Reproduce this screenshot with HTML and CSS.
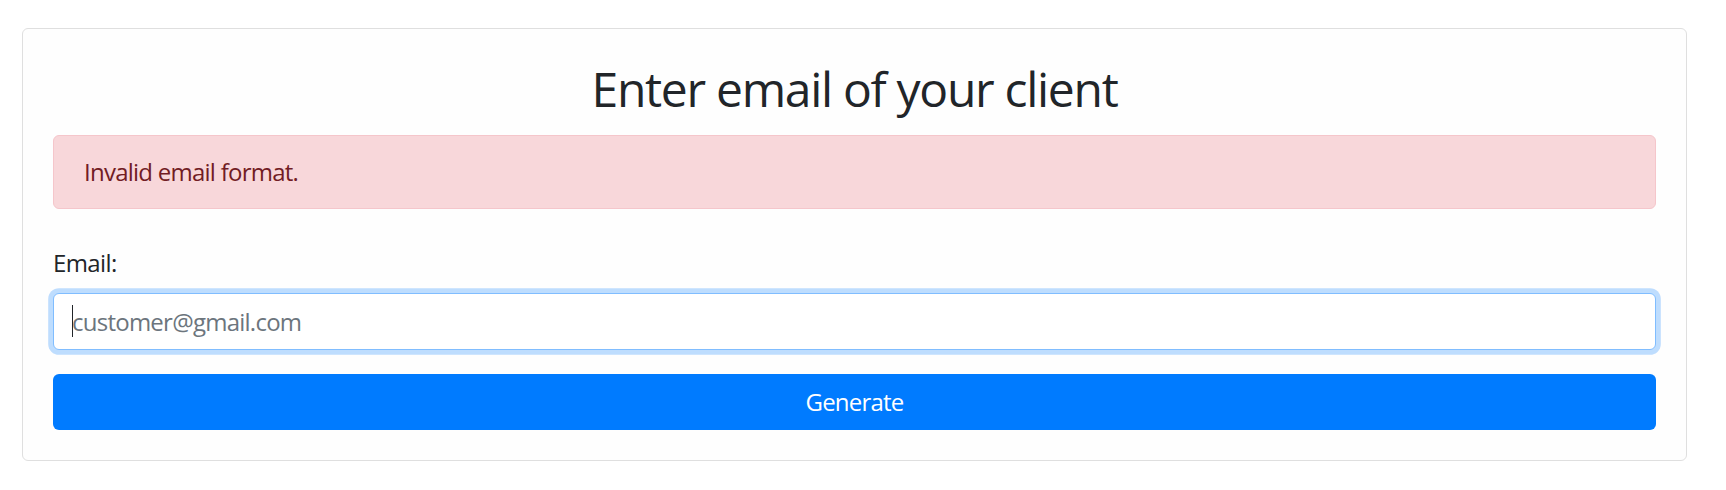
FILE: index.html
```html
<!DOCTYPE html>
<html lang="en">
<head>
<meta charset="utf-8">
<title>Enter email of your client</title>
<link rel="stylesheet" href="styles.css">
</head>
<body>
<main class="page">
  <section class="card">
    <h2 class="card-title">Enter email of your client</h2>
    <div class="alert" role="alert">Invalid email format.</div>
    <form class="form">
      <label class="label" for="email">Email:</label>
      <div class="field">
        <input class="input" id="email" type="email" placeholder="customer@gmail.com">
        <span class="caret"></span>
      </div>
      <button class="btn" type="button">Generate</button>
    </form>
  </section>
</main>
</body>
</html>
```
FILE: styles.css
```css
html, body {
  margin: 0;
  padding: 0;
  background: #ffffff;
}
body {
  font-family: "Open Sans", "Noto Sans", "Liberation Sans", sans-serif;
  color: #212529;
  font-size: 24px;
  line-height: 36px;
}
.page {
  padding: 28px 39px 29px 22px;
}
.card {
  border: 1px solid #dfdfdf;
  border-radius: 6px;
  background: #fefefe;
  padding: 30px;
  display: flex;
  flex-direction: column;
}
.card-title {
  margin: 0 0 17px;
  padding-top: 1px;
  font-size: 48px;
  line-height: 57.6px;
  font-weight: 400;
  text-align: center;
  color: #212529;
  letter-spacing: -1.3px;
}
.alert {
  background: #f8d7da;
  border: 1px solid #f5c6cb;
  border-radius: 6px;
  color: #721c24;
  padding: 18px 30px;
  margin-bottom: 36px;
  letter-spacing: -0.75px;
}
.form {
  display: flex;
  flex-direction: column;
}
.label {
  margin-bottom: 12px;
  letter-spacing: -0.6px;
}
.field {
  position: relative;
  display: flex;
  margin-bottom: 24px;
}
.input {
  flex: 1;
  height: 57px;
  box-sizing: border-box;
  border: 1px solid #80bdff;
  border-radius: 6px;
  box-shadow: 0 0 0 4.8px rgba(0, 123, 255, 0.25);
  padding: 0 18px;
  font-family: inherit;
  font-size: 24px;
  color: #495057;
  background: #ffffff;
  outline: none;
  letter-spacing: -0.75px;
}
.input::placeholder {
  color: #6c757d;
  opacity: 1;
}
.caret {
  position: absolute;
  left: 19px;
  top: 12px;
  width: 1px;
  height: 32px;
  background: #212529;
}
.btn {
  height: 56px;
  border: none;
  border-radius: 6px;
  background: #007bff;
  color: #ffffff;
  font-family: inherit;
  font-size: 24px;
  letter-spacing: -0.8px;
  cursor: pointer;
}
```
